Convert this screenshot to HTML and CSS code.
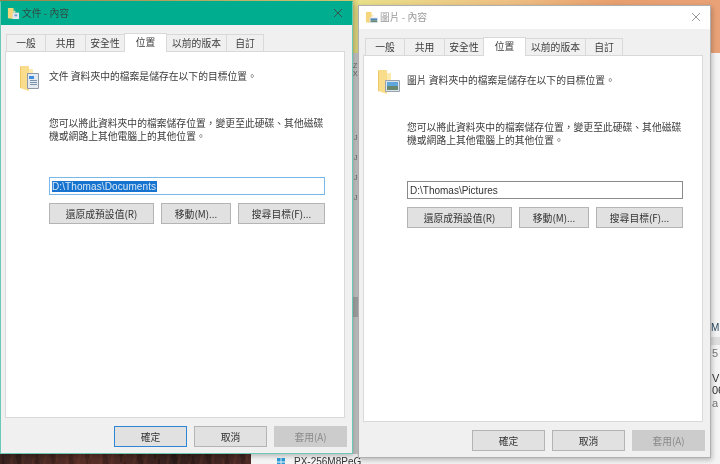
FILE: index.html
```html
<!DOCTYPE html>
<html lang="zh-Hant">
<head>
<meta charset="utf-8">
<title>內容</title>
<link rel="stylesheet" href="styles.css">
</head>
<body>
<div class="desktop">
  <div class="wall-top"></div>
  <div class="wall-bottom"></div>
  <div class="gap-strip">
    <span class="gap-thumb"></span>
    <span class="gap-marks"><i>Z</i><i>X</i></span>
    <span class="gap-arrows"><i>J</i><i>J</i><i>J</i><i>J</i></span>
  </div>
  <div class="explorer-bottom">
    <svg class="win-logo" width="8" height="8" viewBox="0 0 9 9"><path fill="#2a9ad8" d="M0 0h4v4H0zM5 0h4v4H5zM0 5h4v4H0zM5 5h4v4H5z"/></svg>
    <span>PX-256M8PeG</span>
  </div>
  <div class="side-text">
    <span class="side-m">M</span>
    <span class="side-band"></span>
    <span class="side-5">5 (</span>
    <span class="side-v">V :</span>
    <span class="side-06">06</span>
    <span class="side-a">a (</span>
  </div>

  <section class="window window-active">
    <header class="titlebar">
      <svg class="small-folder" width="13" height="13" viewBox="0 0 14 14"><path fill="#f6d67c" d="M1 1h6v12l-6-1z"/><path fill="#f3e4ae" d="M7 4h2v2H7z"/><path fill="#dfe6ee" d="M6 6h7v7H6z"/><path fill="#6f9fd0" d="M8 8h3v2H8z"/></svg>
      <span class="title">文件 - 內容</span>
      <svg class="close" width="10" height="10" viewBox="0 0 10 10"><path d="M1 1l8 8M9 1l-8 8" stroke="#33544c" stroke-width="1" fill="none"/></svg>
    </header>
    <nav class="tabs">
      <span class="tab">一般</span><span class="tab">共用</span><span class="tab">安全性</span><span class="tab tab-on">位置</span><span class="tab">以前的版本</span><span class="tab">自訂</span>
    </nav>
    <div class="panel">
      <div class="head-row">
        <svg class="big-icon" width="20" height="25" viewBox="0 0 20 25"><path fill="#f9dd8c" d="M0 0h9v25l-9-3z"/><path fill="#edc768" d="M0 1h1v21H0z"/><path fill="#fbe9ae" d="M9 3h4v5H9z"/><path fill="#e5eaf0" stroke="#8f99a6" d="M7.500 7.500h11v15h-11z"/><path fill="#3f8ddb" d="M9 10h5v3H9z"/><path fill="#7b93ad" d="M10 14h7v1h-7zM10 16h7v1h-7zM10 18h7v1h-7z"/></svg>
        <p>文件 資料夾中的檔案是儲存在以下的目標位置。</p>
      </div>
      <p class="desc">您可以將此資料夾中的檔案儲存位置，變更至此硬碟、其他磁碟<br>機或網路上其他電腦上的其他位置。</p>
      <div class="path path-focus"><span class="sel">D:\Thomas\Documents</span></div>
      <div class="actions">
        <span class="btn btn-a">還原成預設值(R)</span><span class="btn btn-b">移動(M)...</span><span class="btn btn-c">搜尋目標(F)...</span>
      </div>
    </div>
    <footer class="foot">
      <span class="btn foot-btn btn-default">確定</span><span class="btn foot-btn">取消</span><span class="btn foot-btn btn-off">套用(A)</span>
    </footer>
  </section>

  <section class="window window-idle">
    <header class="titlebar">
      <svg class="small-folder" width="13" height="13" viewBox="0 0 14 14"><path fill="#f6d67c" d="M1 1h6v12l-6-1z"/><path fill="#f3e4ae" d="M7 4h2v2H7z"/><path fill="#dfe6ee" d="M5 7h9v6H5z"/><path fill="#4f86b8" d="M6 8h7v2H6z"/><path fill="#6b8a78" d="M6 10h7v2H6z"/></svg>
      <span class="title">圖片 - 內容</span>
      <svg class="close" width="10" height="10" viewBox="0 0 10 10"><path d="M1 1l8 8M9 1l-8 8" stroke="#9a9a9a" stroke-width="1" fill="none"/></svg>
    </header>
    <nav class="tabs">
      <span class="tab">一般</span><span class="tab">共用</span><span class="tab">安全性</span><span class="tab tab-on">位置</span><span class="tab">以前的版本</span><span class="tab">自訂</span>
    </nav>
    <div class="panel">
      <div class="head-row">
        <svg class="big-icon" width="22" height="24" viewBox="0 0 22 24"><path fill="#f9dd8c" d="M0 0h9v24l-9-3z"/><path fill="#edc768" d="M0 1h1v20H0z"/><path fill="#fbe9ae" d="M9 3h4v7H9z"/><path fill="#dde3ea" stroke="#98a2ad" d="M7.500 10.500h14v11h-14z"/><path fill="#5da7dc" d="M9 12h11v4H9z"/><path fill="#67876f" d="M9 16h11v4H9z"/></svg>
        <p>圖片 資料夾中的檔案是儲存在以下的目標位置。</p>
      </div>
      <p class="desc">您可以將此資料夾中的檔案儲存位置，變更至此硬碟、其他磁碟<br>機或網路上其他電腦上的其他位置。</p>
      <div class="path"><span>D:\Thomas\Pictures</span></div>
      <div class="actions">
        <span class="btn btn-a">還原成預設值(R)</span><span class="btn btn-b">移動(M)...</span><span class="btn btn-c">搜尋目標(F)...</span>
      </div>
    </div>
    <footer class="foot">
      <span class="btn foot-btn">確定</span><span class="btn foot-btn">取消</span><span class="btn foot-btn btn-off">套用(A)</span>
    </footer>
  </section>
</div>
</body>
</html>
```
FILE: styles.css
```css
* { box-sizing: border-box; }
html, body { margin: 0; padding: 0; }
body { width: 720px; height: 464px; overflow: hidden; }

.desktop {
  position: relative;
  width: 720px;
  height: 464px;
  overflow: hidden;
  background: #f4f4f4;
  font-family: "Noto Sans CJK TC", "Liberation Sans", sans-serif;
  font-size: 9.800px;
  color: #3c3c3c;
  filter: blur(0.35px);
}

.wall-top {
  position: absolute;
  left: 0; top: 0;
  width: 720px; height: 53px;
  background: linear-gradient(90deg, #9a8a50 0, #d8cf78 49%, #e9e08a 50%, #eec184 70%, #e8a06f 85%, #e9a277 100%);
}
.wall-bottom {
  position: absolute;
  left: 0; top: 454px;
  width: 251px; height: 10px;
  background:
    repeating-linear-gradient(100deg, rgba(130,70,50,.18) 0 3px, transparent 3px 11px),
    repeating-linear-gradient(80deg, rgba(0,0,0,.2) 0 5px, transparent 5px 17px),
    linear-gradient(90deg, #3a2420, #5a2f28 35%, #33201e 70%, #4d2a26);
}
.gap-strip {
  position: absolute;
  left: 353px; top: 53px;
  width: 5px; height: 401px;
  background: #c6c6c6;
  font-family: "Liberation Sans", sans-serif;
  font-size: 7px;
  line-height: 8px;
  color: #666;
  overflow: hidden;
}
.gap-strip i { display: block; font-style: normal; }
.gap-thumb {
  position: absolute;
  left: 0; top: 244px;
  width: 5px; height: 20px;
  background: #a6a6a6;
}
.gap-marks { position: absolute; left: 0; top: 9px; }
.gap-arrows {
  position: absolute;
  left: 1px; top: 81px;
  display: flex;
  flex-direction: column;
  gap: 12px;
}
.explorer-bottom {
  position: absolute;
  left: 277px; top: 456px;
  display: flex;
  align-items: center;
  gap: 9px;
  font-family: "Liberation Sans", sans-serif;
  font-size: 10px;
  line-height: 11px;
  color: #333;
}
.side-text {
  position: absolute;
  left: 711px; top: 320px;
  width: 9px; height: 90px;
  font-family: "Liberation Sans", sans-serif;
  font-size: 11px;
  line-height: 12px;
  white-space: nowrap;
  overflow: hidden;
}
.side-text span { position: absolute; left: 1px; }
.side-text .side-m { top: 2px; left: 0; color: #2b4a63; font-size: 10px; }
.side-text .side-band { top: 17px; left: 0; width: 9px; height: 8px; background: #dedede; }
.side-text .side-5 { top: 27px; color: #777; }
.side-text .side-v { top: 52px; color: #333; }
.side-text .side-06 { top: 64px; color: #333; }
.side-text .side-a { top: 77px; color: #777; }

.window {
  position: absolute;
  display: flex;
  flex-direction: column;
  width: 353px;
  height: 453px;
  background: #f0f0f0;
}
.window-active {
  left: 0; top: 1px;
  border: 1px solid #6cc9b6;
  border-top-color: #00ae8f;
  box-shadow: 1px 2px 5px rgba(0,0,0,.25);
  z-index: 2;
}
.window-idle {
  left: 358px; top: 5px;
  border: 1px solid #b0b0b0;
  box-shadow: 1px 2px 5px rgba(0,0,0,.25);
  z-index: 1;
}

.titlebar {
  flex: none;
  display: flex;
  align-items: center;
  height: 23px;
  padding: 0 9px 1px 6px;
  gap: 2px;
}
.window-active .titlebar { background: #00ae8f; color: #2f4a44; }
.window-idle .titlebar { background: #fff; color: #999; }
.title { flex: 1; }

.tabs {
  flex: none;
  display: flex;
  align-items: flex-end;
  height: 26px;
  padding-left: 5px;
  position: relative;
  z-index: 1;
}
.window-idle .tabs { padding-left: 6px; }
.tab {
  flex: none;
  display: flex;
  align-items: center;
  justify-content: center;
  height: 17px;
  margin-left: -1px;
  border: 1px solid #d9d9d9;
  border-bottom: 0;
  background: #f0f0f0;
  white-space: nowrap;
}
.tab:first-child { margin-left: 0; width: 40px; }
.tab:nth-child(2) { width: 41px; }
.tab:nth-child(3) { width: 40px; }
.tab:nth-child(4) { width: 43px; }
.tab:nth-child(5) { width: 61px; }
.tab:nth-child(6) { width: 38px; }
.tab-on {
  height: 19px;
  background: #fff;
  margin-bottom: -1px;
  padding-bottom: 2px;
}

.panel {
  flex: none;
  width: 340px;
  height: 367px;
  margin-left: 4px;
  padding: 14px 14px 0 14px;
  background: #fff;
  border: 1px solid #d9d9d9;
  display: flex;
  flex-direction: column;
}
.head-row {
  display: grid;
  grid-template-columns: 29px 1fr;
  height: 25px;
}
.head-row p { margin: 3px 0 0 0; line-height: 14px; white-space: nowrap; }
.desc {
  margin: 26px 0 0 29px;
  width: 276px;
  line-height: 13px;
  white-space: nowrap;
}
.path {
  flex: none;
  width: 276px;
  height: 18px;
  margin: 34px 0 0 29px;
  padding: 0 2px;
  display: flex;
  align-items: center;
  border: 1px solid #8a8a8a;
  font-family: "Liberation Sans", sans-serif;
  font-size: 10px;
  color: #333;
  background: #fff;
}
.path-focus { border-color: #7ab8ea; }
.sel { background: #1673cf; color: #d8e8f6; padding-right: 1px; letter-spacing: 0.1px; }

.actions {
  display: flex;
  gap: 7px;
  margin: 8px 0 0 29px;
  width: 276px;
}
.btn {
  display: flex;
  align-items: center;
  justify-content: center;
  height: 21px;
  border: 1px solid #b4b4b4;
  background: #e1e1e1;
  color: #333;
  white-space: nowrap;
}
.btn-a { width: 105px; }
.btn-b { width: 70px; }
.btn-c { width: 87px; }

.foot {
  flex: none;
  display: flex;
  justify-content: flex-end;
  gap: 7px;
  padding: 8px 5px 0 0;
}
.foot-btn { width: 73px; }
.btn-default { border-color: #2b86d6; }
.btn-off { background: #cccccc; border-color: #cccccc; color: #8a8a8a; }
```
